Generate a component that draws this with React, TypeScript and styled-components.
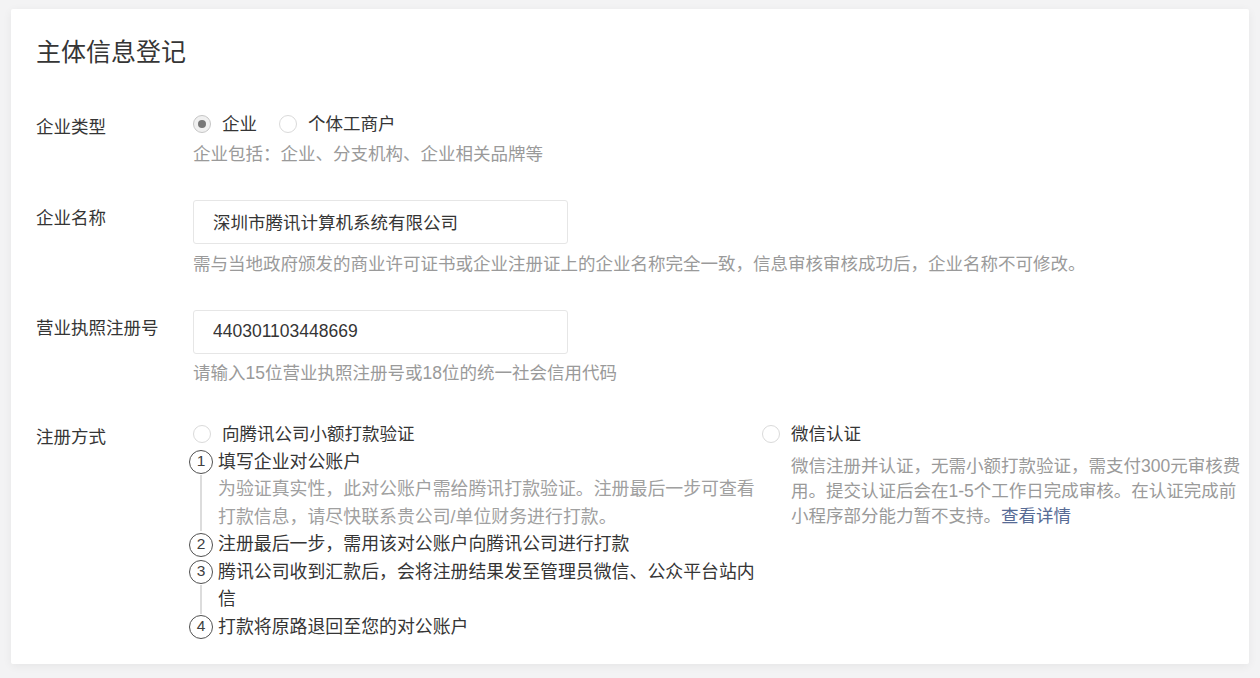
import React from "react";
import styled, { createGlobalStyle } from "styled-components";

const GlobalStyle = createGlobalStyle`
  html, body {
    margin: 0;
    padding: 0;
    background: #f3f3f4;
  }
  body {
    font-family: "Liberation Sans", "Noto Sans CJK SC", sans-serif;
    color: #353535;
  }
`;

// Page + card
const Page = styled.div`
  padding: 9px 11px 14px;
`;

const Card = styled.section`
  background: #fff;
  border-radius: 2px;
  box-shadow: 0 2px 10px rgba(0, 0, 0, 0.06);
  padding: 25.5px 10px 23px 25px;
`;

const Title = styled.h2`
  margin: 0 0 39px;
  font-size: 25px;
  line-height: 35px;
  font-weight: 400;
  color: #353535;
`;

const Form = styled.div`
  display: flex;
  flex-direction: column;
  gap: 33px;
`;

const Row = styled.div`
  display: grid;
  grid-template-columns: 157px 1fr;
`;

const Label = styled.div`
  font-size: 17.5px;
  line-height: 30px;
  padding-top: 3px;
  color: #353535;
`;

const Field = styled.div`
  display: flex;
  flex-direction: column;
`;

const Hint = styled.div<{ $top?: number }>`
  margin-top: ${p => p.$top ?? 0}px;
  font-size: 17.5px;
  line-height: 25px;
  color: #9a9a9a;
`;

// Radio
const RadioGroup = styled.div`
  display: flex;
  align-items: center;
  gap: 22px;
  height: 30px;
`;

const RadioOption = styled.label`
  display: flex;
  align-items: center;
  gap: 11px;
  font-size: 17.5px;
  line-height: 30px;
  color: #353535;
`;

const RadioDot = styled.span<{ $checked?: boolean }>`
  box-sizing: border-box;
  width: 18px;
  height: 18px;
  border-radius: 50%;
  border: 1px solid ${p => (p.$checked ? "#c6c6c6" : "#dadada")};
  background: ${p => (p.$checked ? "#f0f0f0" : "#fff")};
  display: flex;
  align-items: center;
  justify-content: center;
  flex-shrink: 0;

  &::after {
    content: "";
    display: ${p => (p.$checked ? "block" : "none")};
    width: 8px;
    height: 8px;
    border-radius: 50%;
    background: #777;
  }
`;

const Radio = ({ checked, children }: { checked?: boolean; children: React.ReactNode }) => (
  <RadioOption>
    <RadioDot $checked={checked} />
    {children}
  </RadioOption>
);

// Input
const TextInput = styled.input`
  box-sizing: border-box;
  width: 375px;
  height: 44px;
  padding: 0 19px;
  border: 1px solid #e6e6e6;
  border-radius: 3px;
  background: #fff;
  font-family: inherit;
  font-size: 17.5px;
  color: #353535;
  outline: none;
`;

// Registration methods
const Methods = styled.div`
  display: grid;
  grid-template-columns: 569px 1fr;
`;

const Steps = styled.ol`
  list-style: none;
  margin: 0 0 0 -4px;
  padding: 0;
`;

const StepItem = styled.li`
  display: grid;
  grid-template-columns: 24px 544px;
  column-gap: 5px;
  font-size: 17.9px;
  line-height: 27.5px;
`;

const StepMarker = styled.div`
  display: flex;
  flex-direction: column;
  align-items: center;
`;

const StepCircle = styled.span`
  box-sizing: border-box;
  margin-top: 1.75px;
  width: 24px;
  height: 24px;
  border-radius: 50%;
  border: 1.8px solid #505050;
  color: #404040;
  font-size: 15.5px;
  line-height: 20.4px;
  text-align: center;
  flex-shrink: 0;
`;

const StepLine = styled.span`
  flex: 1;
  width: 1.6px;
  margin-top: 1px;
  background: #dcdcdc;
`;

const StepTitle = styled.div`
  color: #353535;
`;

const StepDesc = styled.div`
  color: #a0a0a0;
`;

const Step = ({
  n,
  title,
  desc,
  connect,
}: {
  n: number;
  title: string;
  desc?: string;
  connect?: boolean;
}) => (
  <StepItem>
    <StepMarker>
      <StepCircle>{n}</StepCircle>
      {connect && <StepLine />}
    </StepMarker>
    <div>
      <StepTitle>{title}</StepTitle>
      {desc && <StepDesc>{desc}</StepDesc>}
    </div>
  </StepItem>
);

const WechatDesc = styled.div`
  width: 452px;
  margin: 5px 0 0 29px;
  font-size: 17.5px;
  line-height: 25px;
  color: #9a9a9a;
`;

const Link = styled.span`
  color: #576b95;
  cursor: pointer;
`;

const App = () => (
  <>
    <GlobalStyle />
    <Page>
      <Card>
        <Title>主体信息登记</Title>
        <Form>
          <Row>
            <Label>企业类型</Label>
            <Field>
              <RadioGroup>
                <Radio checked>企业</Radio>
                <Radio>个体工商户</Radio>
              </RadioGroup>
              <Hint $top={3}>企业包括：企业、分支机构、企业相关品牌等</Hint>
            </Field>
          </Row>
          <Row>
            <Label>企业名称</Label>
            <Field>
              <TextInput readOnly defaultValue="深圳市腾讯计算机系统有限公司" />
              <Hint $top={8}>
                需与当地政府颁发的商业许可证书或企业注册证上的企业名称完全一致，信息审核审核成功后，企业名称不可修改。
              </Hint>
            </Field>
          </Row>
          <Row>
            <Label>营业执照注册号</Label>
            <Field>
              <TextInput readOnly defaultValue="440301103448669" />
              <Hint $top={7}>请输入15位营业执照注册号或18位的统一社会信用代码</Hint>
            </Field>
          </Row>
          <Row>
            <Label>注册方式</Label>
            <Methods>
              <Field>
                <RadioGroup>
                  <Radio>向腾讯公司小额打款验证</Radio>
                </RadioGroup>
                <Steps>
                  <Step
                    n={1}
                    connect
                    title="填写企业对公账户"
                    desc="为验证真实性，此对公账户需给腾讯打款验证。注册最后一步可查看打款信息，请尽快联系贵公司/单位财务进行打款。"
                  />
                  <Step n={2} title="注册最后一步，需用该对公账户向腾讯公司进行打款" />
                  <Step
                    n={3}
                    connect
                    title="腾讯公司收到汇款后，会将注册结果发至管理员微信、公众平台站内信"
                  />
                  <Step n={4} title="打款将原路退回至您的对公账户" />
                </Steps>
              </Field>
              <Field>
                <RadioGroup>
                  <Radio>微信认证</Radio>
                </RadioGroup>
                <WechatDesc>
                  微信注册并认证，无需小额打款验证，需支付300元审核费用。提交认证后会在1-5个工作日完成审核。在认证完成前小程序部分能力暂不支持。
                  <Link>查看详情</Link>
                </WechatDesc>
              </Field>
            </Methods>
          </Row>
        </Form>
      </Card>
    </Page>
  </>
);

export default App;
